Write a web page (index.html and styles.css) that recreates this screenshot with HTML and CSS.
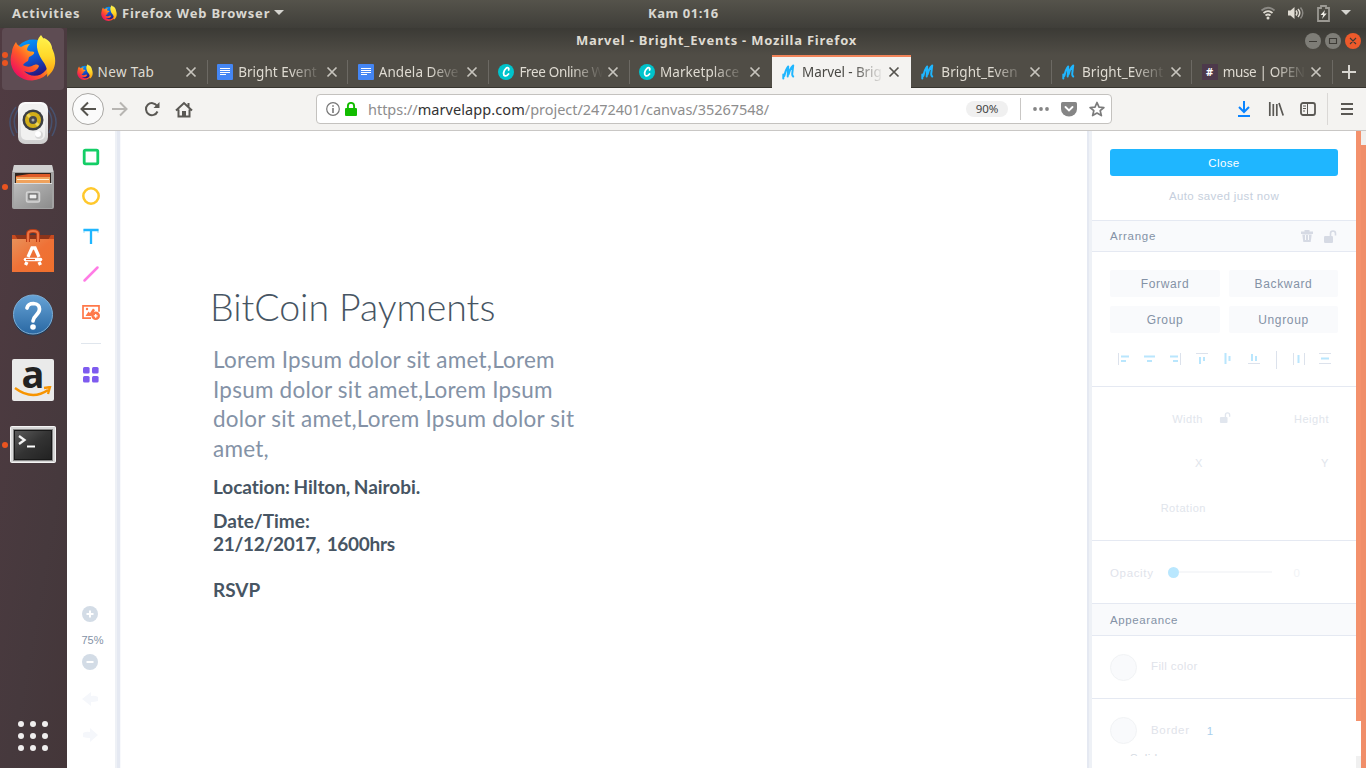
FILE: index.html
```html
<!DOCTYPE html>
<html lang="en">
<head>
<meta charset="utf-8">
<title>Marvel - Bright_Events</title>
<link rel="stylesheet" href="styles.css">
</head>
<body>
<svg class="defs" width="0" height="0" aria-hidden="true">
  <defs>
    <linearGradient id="fxBody" x1="0.9" y1="0.1" x2="0.15" y2="0.85"><stop offset="0" stop-color="#fff44f"/><stop offset=".35" stop-color="#ffb01f"/><stop offset=".65" stop-color="#ff5a28"/><stop offset="1" stop-color="#f0125c"/></linearGradient>
    <linearGradient id="fxGlobe" x1="0" y1="0" x2="0.4" y2="1"><stop offset="0" stop-color="#00a7ff"/><stop offset=".5" stop-color="#0a62e0"/><stop offset="1" stop-color="#27157e"/></linearGradient>
    <linearGradient id="fxTail" x1="0" y1="0" x2="0" y2="1"><stop offset="0" stop-color="#fff44f"/><stop offset=".5" stop-color="#ffd92a"/><stop offset="1" stop-color="#ff980e"/></linearGradient>
    <linearGradient id="grey" x1="0" y1="0" x2="0" y2="1"><stop offset="0" stop-color="#fbfbfb"/><stop offset="1" stop-color="#cfcfcf"/></linearGradient>
    <linearGradient id="steel" x1="0" y1="0" x2="1" y2="1"><stop offset="0" stop-color="#bcbcbc"/><stop offset="1" stop-color="#8c8c8c"/></linearGradient>
    <linearGradient id="bag" x1="0" y1="0" x2="1" y2="1"><stop offset="0" stop-color="#e8915a"/><stop offset=".5" stop-color="#ef7136"/><stop offset="1" stop-color="#f0702c"/></linearGradient>
    <linearGradient id="help" x1="0" y1="0" x2="0" y2="1"><stop offset="0" stop-color="#66a3d6"/><stop offset="1" stop-color="#2a68a3"/></linearGradient>
    <linearGradient id="term" x1="0" y1="0" x2="1" y2="1"><stop offset="0" stop-color="#5a5a5a"/><stop offset=".5" stop-color="#333"/><stop offset="1" stop-color="#222"/></linearGradient>
  </defs>
  <symbol id="firefox" viewBox="0 0 46 48">
    <circle cx="23" cy="24" r="19.500" fill="url(#fxGlobe)"/>
    <path d="M6 7c1 3 3 4 5 5 3-2 6-3 9-3-2 2-3 4-3 6 2 2 5 1 7 2 1 2-3 4-5 5l-1 4c-2 1-4 2-5 4 3 2 6 2 9 1 3-2 6-2 7 0-2 6-10 8-15 5 5 6 16 7 22-1 6-7 3-15-1-21-3-4-3-8-1-11 7 3 9 9 8 14 3 8 0 17-5 22A22 22 0 0 1 7 40C1 34-1 26 2 17 2 13 4 10 6 7z" fill="url(#fxBody)"/>
    <path d="M31 0c4 7 13 11 14 23 1 8-2 14-8 19 1-7-1-12-5-17-5-8-8-18-1-25z" fill="url(#fxTail)"/>
  </symbol>
  <symbol id="x" viewBox="0 0 12 12"><path d="M1.500 1.500l9 9M10.500 1.500l-9 9" fill="none" stroke="currentColor" stroke-width="1.700"/></symbol>
  <symbol id="docs" viewBox="0 0 16 16"><rect width="16" height="16" rx="1" fill="#4486f4"/><path d="M3 4.500h10M3 6.500h10M3 8.500h10M3 10.500h6" stroke="#fff" stroke-width="1"/></symbol>
  <symbol id="canva" viewBox="0 0 16 16"><circle cx="8" cy="8" r="8" fill="#00c4cc"/><path d="M10.600 6c.8-2.500-1.300-3-3-1.200C5.200 7 5 11 6.800 11.800c1.300.5 2.700-.5 3.700-1.800" fill="none" stroke="#fff" stroke-width="1.800" stroke-linecap="round"/></symbol>
  <symbol id="marvel" viewBox="0 0 16 16"><path d="M2.300 10.500v4M3.300 12C4 9 5 5 7.200 2.500L6.700 12.500M7.500 10.500C8.300 7 9.500 4 12.200 1.500L11.200 10q0 2 1 2.500" fill="none" stroke="#1fb6ff" stroke-width="2" stroke-linecap="round" stroke-linejoin="round"/></symbol>
  <symbol id="unlock" viewBox="0 0 14 13"><rect x="1" y="6" width="9" height="7" rx="1.200" fill="currentColor"/><path d="M7.500 6V3.500a2.500 2.500 0 0 1 5 0V5.500" fill="none" stroke="currentColor" stroke-width="1.600"/></symbol>
</svg>

<header class="topbar">
  <span class="activities">Activities</span>
  <span class="app"><svg width="16" height="17"><use href="#firefox"/></svg><span class="appname">Firefox Web Browser</span><svg width="10" height="6"><path d="M0 0h10L5 5z" fill="#d5d4cf"/></svg></span>
  <span class="clock">Kam 01:16</span>
  <span class="status">
    <svg width="16" height="16" viewBox="0 0 16 16" fill="none" stroke="#dfdbd2"><path d="M1.500 5.500Q8 0 14.500 5.500" stroke="#8b8984" stroke-width="1.800"/><path d="M3.500 8Q8 4.200 12.500 8M5.500 10.500Q8 8.500 10.500 10.500" stroke-width="1.700"/><circle cx="8" cy="13" r="1.500" fill="#dfdbd2" stroke="none"/></svg>
    <svg width="16" height="14" viewBox="0 0 16 14" fill="none" stroke="#dfdbd2"><path d="M0 4.500h2.500L6.500 1v12L2.500 9.500H0z" fill="#dfdbd2" stroke="none"/><path d="M8 4.500q2 2.500 0 5M10 3q3.500 4 0 8" stroke-width="1.500"/><path d="M12.500 1.500q4.500 5.500 0 11" stroke="#8b8984" stroke-width="1.500"/></svg>
    <svg width="13" height="17" viewBox="0 0 13 17"><path d="M1 3h3V1h5v2h3v13H1z" fill="none" stroke="#9b9993" stroke-width="1.800"/><path d="M8 5L3.500 10h2.700L5 14l4.700-5.500H7z" fill="#f0eee8"/></svg>
    <svg width="10" height="6"><path d="M0 0h10L5 5z" fill="#d5d4cf"/></svg>
  </span>
</header>

<div class="desktop">
  <nav class="dock">
    <div class="slot active"><i class="dot two"></i><svg width="46" height="48"><use href="#firefox"/></svg></div>
    <div class="slot"><svg width="48" height="46" viewBox="0 0 48 46">
      <g fill="none" stroke="#45628f" stroke-width="1.500" opacity=".6"><path d="M7 7Q-4 20 5 36M41 7q11 13 2 29M9 10Q2 20 8 33M39 10q7 10 1 23"/></g>
      <rect x="9" y="2" width="30" height="42" rx="7" fill="url(#grey)"/><rect x="12" y="4" width="24" height="36" rx="5" fill="#f1f1f0"/>
      <circle cx="24" cy="20" r="10.500" fill="#3c3f43"/><circle cx="24" cy="20" r="8" fill="#d2ae18"/><path d="M18.500 14.500l11 11" stroke="#eed75d" stroke-width="3"/><circle cx="24" cy="20" r="4" fill="#49494a"/><circle cx="24" cy="20" r="1.500" fill="#aaa"/><circle cx="30" cy="35" r="4" fill="#d8d8d8"/><circle cx="29" cy="34" r="3" fill="#fff"/></svg></div>
    <div class="slot"><i class="dot"></i><svg width="42" height="44" viewBox="0 0 42 44">
      <path d="M2 0h38l2 8v34a2 2 0 0 1-2 2H2a2 2 0 0 1-2-2V8z" fill="#a3a3a3"/><path d="M2 0h38l1.500 7H.5z" fill="#d0d0d0"/><rect x="3" y="8" width="36" height="11" fill="#30251f"/><path d="M4 11l13-2h21v8H4z" fill="#df5b28"/><path d="M4 12h34v6H4z" fill="#f0a25c"/><path d="M5 14.500h32" stroke="#fff1d6"/>
      <path d="M2 18h38v25H2z" fill="url(#steel)"/><path d="M2 18.500h38" stroke="#ddd"/><rect x="14.500" y="27" width="13" height="10" rx="1.500" fill="#b0b0b0" stroke="#d3d3d3" stroke-width="1.500"/><rect x="17" y="29" width="8" height="5" fill="#eee" stroke="#555"/></svg></div>
    <div class="slot"><svg width="42" height="44" viewBox="0 0 42 44">
      <path d="M0 6h42v10H0z" fill="#c64b20"/><path d="M3 6l3 5h30l3-5" fill="#8c341a"/><path d="M0 10h42v33H0z" fill="url(#bag)"/><path d="M16 13V5q0-3 5-3t5 3v8" fill="none" stroke="#b93f18" stroke-width="4"/><path d="M16 13V5q0-3 5-3t5 3v8" fill="none" stroke="#ee7443" stroke-width="2"/>
      <path d="M16 28L20 19h3l4 9M15 33l-1.500 3M27 33l1.500 3" fill="none" stroke="#fff" stroke-width="3.300"/><path d="M13.500 30.500h15" stroke="#fff" stroke-width="3.600" stroke-linecap="round"/><path d="M14 30.500h9" stroke="#e4612b" stroke-width="1.200"/></svg></div>
    <div class="slot"><svg width="42" height="42" viewBox="0 0 42 42"><circle cx="21" cy="21.500" r="20" fill="#203d5c"/><circle cx="21" cy="20.500" r="19.500" fill="url(#help)" stroke="#80afd5"/><path d="M15 14q1-4.500 6.500-4.500 6 .5 6 5.500c0 6-6 6-6.500 12" fill="none" stroke="#fff" stroke-width="3.700" stroke-linecap="round"/><circle cx="21" cy="33" r="2.800" fill="#fff"/></svg></div>
    <div class="slot amazon"><span class="a">a</span><svg class="smile" width="38" height="12" viewBox="0 0 38 12"><path d="M1 2q17 13 33 2M30 2l6-1-2 7" fill="none" stroke="#f79400" stroke-width="2.300"/></svg></div>
    <div class="slot"><i class="dot"></i><svg width="46" height="38" viewBox="0 0 46 38"><rect x=".5" y=".5" width="45" height="36" rx="1" fill="#d7d7d7" stroke="#f4f4f4"/><rect x="3.500" y="3.500" width="39" height="31" fill="#181818" stroke="#888"/><rect x="5" y="5" width="36" height="28" fill="url(#term)"/><path d="M9 10l5.500 4L9 18" fill="none" stroke="#f3f3f3" stroke-width="2.300"/><path d="M17 20.500h8" stroke="#fff" stroke-width="2"/></svg></div>
    <div class="grid"><i></i><i></i><i></i><i></i><i></i><i></i><i></i><i></i><i></i></div>
  </nav>

  <main class="window">
    <div class="titlebar"><span>Marvel - Bright_Events - Mozilla Firefox</span>
      <svg class="winbtns" width="58" height="18" viewBox="0 0 58 18"><circle cx="9" cy="9" r="8" fill="#7e7d77"/><circle cx="29" cy="9" r="8" fill="#7e7d77"/><circle cx="49" cy="9" r="8" fill="#ed5a2b"/><path d="M5 9.500h8M25.500 6.500h7v5h-7zM46 6l6 6M52 6l-6 6" fill="none" stroke="#3d3b36" stroke-width="1.100"/></svg>
    </div>
    <div class="tabs">
      <div class="tab newtab"><svg width="16" height="17"><use href="#firefox"/></svg><span>New Tab</span><svg class="x" width="12" height="12"><use href="#x"/></svg></div>
      <div class="tab"><svg width="16" height="16"><use href="#docs"/></svg><span>Bright Event</span><svg class="x" width="12" height="12"><use href="#x"/></svg></div>
      <div class="tab"><svg width="16" height="16"><use href="#docs"/></svg><span>Andela Deve</span><svg class="x" width="12" height="12"><use href="#x"/></svg></div>
      <div class="tab"><svg width="16" height="16"><use href="#canva"/></svg><span class="tight">Free Online W</span><svg class="x" width="12" height="12"><use href="#x"/></svg></div>
      <div class="tab last"><svg width="16" height="16"><use href="#canva"/></svg><span>Marketplace</span><svg class="x" width="12" height="12"><use href="#x"/></svg></div>
      <div class="tab current"><svg width="16" height="16"><use href="#marvel"/></svg><span>Marvel - Brig</span><svg class="x" width="12" height="12"><use href="#x"/></svg></div>
      <div class="tab"><svg width="16" height="16"><use href="#marvel"/></svg><span>Bright_Even</span><svg class="x" width="12" height="12"><use href="#x"/></svg></div>
      <div class="tab"><svg width="16" height="16"><use href="#marvel"/></svg><span>Bright_Event</span><svg class="x" width="12" height="12"><use href="#x"/></svg></div>
      <div class="tab"><b class="hash">#</b><span class="tight">muse | OPEN</span><svg class="x" width="12" height="12"><use href="#x"/></svg></div>
      <div class="plus"><svg width="14" height="14"><path d="M7 0v14M0 7h14" stroke="#d8d6d0" stroke-width="2"/></svg></div>
    </div>

    <div class="navbar">
      <div class="back"><svg width="18" height="16" viewBox="0 0 18 16"><path d="M17 8H2.500M9 1.500L2.500 8 9 14.500" fill="none" stroke="#56544f" stroke-width="2"/></svg></div>
      <svg class="fwd" width="18" height="16" viewBox="0 0 18 16"><path d="M1 8h14.500M9 1.500L15.500 8 9 14.500" fill="none" stroke="#b7b5b2" stroke-width="2"/></svg>
      <svg class="reload" width="16" height="16" viewBox="0 0 16 16"><path d="M13.500 10.500A6 6 0 1 1 13 4.800" fill="none" stroke="#5a5854" stroke-width="2"/><path d="M15.500 1v6h-6z" fill="#5a5854"/></svg>
      <svg class="home" width="18" height="17" viewBox="0 0 18 17"><path d="M1 9.500L9 2l8 7.500M3.500 8.500V15.500h11V8.500M13.500 2v4" fill="none" stroke="#5a5854" stroke-width="2"/><rect x="7" y="10" width="4" height="5" fill="#5a5854"/></svg>
      <div class="url">
        <svg width="14" height="14" viewBox="0 0 14 14"><circle cx="7" cy="7" r="6.300" fill="none" stroke="#777" stroke-width="1.200"/><path d="M7 6v5M7 3.200v1.600" stroke="#777" stroke-width="1.600"/></svg>
        <svg class="lock" width="12" height="14" viewBox="0 0 12 14"><path d="M2.900 7V4a3.100 3.100 0 0 1 6.200 0v3" fill="none" stroke="#12bc00" stroke-width="1.900"/><rect y="6" width="12" height="8" rx="1" fill="#12bc00"/></svg>
        <span class="addr">https://<em>marvelapp.com</em>/project/2472401/canvas/35267548/</span>
        <span class="zoom">90%</span><i class="sep"></i>
        <svg width="16" height="4" viewBox="0 0 16 4" fill="#858585"><circle cx="2" cy="2" r="1.900"/><circle cx="8" cy="2" r="1.900"/><circle cx="14" cy="2" r="1.900"/></svg>
        <svg class="pocket" width="16" height="15" viewBox="0 0 16 15"><path d="M1.500 0h13Q16 0 16 1.500V7A8 7.500 0 0 1 0 7V1.500Q0 0 1.500 0z" fill="#858585"/><path d="M4.500 5L8 8.500 11.500 5" fill="none" stroke="#fff" stroke-width="1.900" stroke-linecap="round"/></svg>
        <svg class="star" width="16" height="16" viewBox="0 0 16 16"><path d="M8 1.500l2 4.600 4.900.4-3.700 3.200 1.200 4.900L8 12l-4.400 2.600 1.200-4.900L1.100 6.500 6 6.100z" fill="none" stroke="#7b7b7b" stroke-width="1.700" stroke-linejoin="round"/></svg>
      </div>
      <div class="tools">
        <svg width="14" height="16" viewBox="0 0 14 16"><path d="M7 0v11M2 6l5 5 5-5M1 15h12" fill="none" stroke="#0a84ff" stroke-width="2"/></svg>
        <svg width="16" height="14" viewBox="0 0 16 14"><path d="M1.800 0v14M5.300 2v12M8.800 2v12M11 1l4.200 12.500" fill="none" stroke="#5a5854" stroke-width="1.700"/></svg>
        <svg width="16" height="14" viewBox="0 0 16 14"><rect x="1" y="1" width="14" height="12" rx="2" fill="none" stroke="#5a5854" stroke-width="1.800"/><path d="M7.500 1v12M3 4h3M3 6.500h3M3 9h2" fill="none" stroke="#5a5854"/></svg>
      </div>
      <div class="burger"><svg width="12" height="12"><path d="M0 1h12M0 6h12M0 11h12" stroke="#5a5854" stroke-width="1.800"/></svg></div>
    </div>

    <section class="page">
      <aside class="toolbar">
        <svg class="t1" width="18" height="18"><rect x="2.200" y="2.200" width="13.600" height="13.600" rx="1.300" fill="none" stroke="#13ce66" stroke-width="2.800"/></svg>
        <svg class="t2" width="18" height="18"><circle cx="9" cy="9" r="7.700" fill="none" stroke="#ffc82c" stroke-width="2.500"/></svg>
        <svg class="t3" width="18" height="18"><path d="M1.500 3h15M9 3v14" fill="none" stroke="#1fb6ff" stroke-width="2.300"/><path d="M2 2v4M16 2v4" stroke="#1fb6ff" stroke-width=".8" opacity=".6"/></svg>
        <svg class="t4" width="18" height="18"><path d="M2.500 15.500l13-13" stroke="#ff7ce5" stroke-width="2.500" stroke-linecap="round"/></svg>
        <svg class="t5" width="18" height="17" viewBox="0 0 18 17"><path d="M9 14.200H1V1.800h16v6" fill="none" stroke="#ff7849" stroke-width="1.700"/><path d="M3.500 12l3-4.500L8 9l3-4.500L13 6 9.500 12z" fill="#ff7849"/><circle cx="5" cy="5" r="1.200" fill="#ff7849"/><circle cx="13.700" cy="11.800" r="4.300" fill="#ff7849"/><path d="M13.700 9.900v3.800M11.800 11.800h3.800" stroke="#fff" stroke-width="1.300"/></svg>
        <hr>
        <svg class="t6" width="16" height="16" fill="#7e5bef"><rect width="6.600" height="6.600" rx="1.500"/><rect x="9" width="6.600" height="6.600" rx="1.500"/><rect y="9" width="6.600" height="6.600" rx="1.500"/><rect x="9" y="9" width="6.600" height="6.600" rx="1.500"/></svg>
        <div class="zoomer">
          <svg width="16" height="16"><circle cx="8" cy="8" r="8" fill="#d3dce6"/><path d="M8 4.500v7M4.500 8h7" stroke="#fff" stroke-width="2"/></svg>
          <span>75%</span>
          <svg width="16" height="16"><circle cx="8" cy="8" r="8" fill="#d3dce6"/><path d="M4.500 8h7" stroke="#fff" stroke-width="2"/></svg>
          <svg class="undo" width="16" height="14"><path d="M0 7l9-7v4q4-1 7 1v4q-3 1-7 1v4z" fill="#f5f7fb"/></svg>
          <svg class="redo" width="16" height="14"><path d="M16 7L8 0v4q-4-1-7 1v4q3 1 7 1v4z" fill="#f5f7fb"/></svg>
        </div>
      </aside>
      <article class="canvas">
        <h1>BitCoin Payments</h1>
        <p class="lorem">Lorem Ipsum dolor sit amet,Lorem<br>Ipsum dolor sit amet,Lorem Ipsum<br>dolor sit amet,Lorem Ipsum dolor sit<br>amet,</p>
        <p class="loc">Location: Hilton, Nairobi.</p>
        <p class="date">Date/Time:<br><span>21/12/2017,&nbsp; 1600hrs</span></p>
        <p class="rsvp">RSVP</p>
      </article>
      <aside class="panel">
        <div class="save"><button>Close</button><span>Auto saved just now</span></div>
        <div class="head"><span>Arrange</span><div class="acts"><svg width="12" height="12" viewBox="0 0 12 12"><path d="M0 1.500h3.500V0h5v1.500H12V4H0z" fill="#d6dae4"/><path d="M1.300 4.500h9.400L9.700 12H2.300z" fill="#d6dae4"/><path d="M4.500 5v5M7.500 5v5" stroke="#f9fafc"/></svg><svg width="14" height="13"><use href="#unlock"/></svg></div></div>
        <div class="arrange">
          <div class="btns"><button>Forward</button><button>Backward</button><button>Group</button><button>Ungroup</button></div>
          <svg class="aligns" width="228" height="22" viewBox="0 0 228 22" fill="none">
            <path d="M11 8.500h8M11 13h5M34 8.500h11M37 13h5M60 8.500h8M63 13h5M90 9v7M94 9v4M115.500 5v11M119.500 8v5M142 6v7M146 8v5M188.500 7v8M211 10.500h8" stroke="#b9e6fd" stroke-width="2"/>
            <path d="M8.500 5v12M70.500 5v12M86 5.500h12M138 15.500h12M183.500 5v12M194.500 5v12M209 5.500h12M209 15.500h12" stroke="#dce2ec"/>
            <path d="M166.500 3v18" stroke="#dce2ec"/>
          </svg>
        </div>
        <div class="dims"><span>Width</span><svg width="12" height="11" viewBox="0 0 14 13"><use href="#unlock"/></svg><span>Height</span><span>X</span><i></i><span>Y</span><span class="rot">Rotation</span></div>
        <div class="opacity"><span>Opacity</span><div class="slider"><i></i></div><span class="zero">0</span></div>
        <div class="head app2"><span>Appearance</span></div>
        <div class="row fill"><i class="swatch"></i><span>Fill color</span></div>
        <div class="row border"><i class="swatch"></i><span>Border</span><span class="one">1</span></div>
        <div class="solid"><span>Solid</span></div>
      </aside>
      <div class="edge"><div class="inner"><i></i><b></b><u></u></div><div class="outer"></div></div>
    </section>
  </main>
</div>
</body>
</html>
```
FILE: styles.css
```css
* { box-sizing: border-box; }
body { margin: 0; width: 1366px; height: 768px; overflow: hidden; font-family: "Noto Sans", sans-serif; background: #fff; }
svg { display: block; flex: none; }
.defs { position: absolute; }
i { font-style: normal; display: block; }
button { border: 0; padding: 0; font: inherit; color: inherit; letter-spacing: inherit; }

.topbar { height: 28px; display: grid; grid-template-columns: 101px 547px 1fr auto; align-items: center; background: linear-gradient(#55534b, #3f3e39); color: #d9d7d1; font-weight: 700; font-size: 13px; line-height: 24px; padding: 0 0 2px; }
.activities { padding-left: 12px; letter-spacing: .8px; }
.app { display: flex; align-items: center; gap: 5px; letter-spacing: .8px; }
.appname { margin-right: -1px; }
.clock { letter-spacing: .55px; }
.status { display: flex; align-items: center; gap: 12px; padding-right: 15px; }
.status svg:nth-child(3) { margin-left: 1px; margin-right: -1px; }

.desktop { display: flex; height: 740px; }
.dock { width: 67px; flex: none; background: linear-gradient(100deg, #503b42, #46393d 70%, #443639); display: flex; flex-direction: column; align-items: center; padding: 0 1px 0 0; }
.slot { width: 62px; height: 62px; margin-bottom: 2px; display: flex; align-items: center; justify-content: center; position: relative; }
.slot.active { background: #5e4c53; border-radius: 4px; }
.slot:nth-child(n+4) { margin-bottom: 2.400px; }
.dot { position: absolute; left: 0; top: 28px; width: 6px; height: 6px; border-radius: 3px; background: #e95420; }
.dot.two { top: 24px; box-shadow: 0 8px #e95420; }
.slot.amazon { width: 42px; height: 42px; margin: 10px 0 13px; border-radius: 2px; background: #eaeaea; display: block; }
.amazon .a { display: block; text-align: center; font: 700 38px/32px "Open Sans", sans-serif; height: 28px; color: #222; margin-top: -3px; padding-top: 1px; }
.smile { margin: 2px 0 0 2px; }
.grid { margin-top: auto; margin-bottom: 17px; display: grid; grid-template-columns: repeat(3, 6px); gap: 6px; }
.grid i { width: 6px; height: 6px; border-radius: 50%; background: #f0eeee; }

.window { flex: 1; min-width: 0; display: flex; flex-direction: column; background: #f4f3f1; }
.titlebar { height: 27px; flex: none; background: linear-gradient(#3b3a35, #504d46); color: #dfdbd2; font-weight: 700; font-size: 13px; line-height: 25px; letter-spacing: .78px; text-align: center; position: relative; }
.winbtns { position: absolute; right: 4px; top: 4px; }
.tabs { height: 33px; flex: none; display: flex; background: linear-gradient(#504d46, #504d46 32px, #37352f 32px); color: #dfdbd2; font-size: 13.500px; }
.tab { width: 140.650px; flex: none; display: flex; align-items: center; padding: 1px 10.500px 0 9.500px; position: relative; }
.tab::after { content: ""; position: absolute; right: 0; top: 5px; width: 1px; height: 24px; background: #6c6963; }
.tab.last::after, .current::after { display: none; }
.tab span { flex: 1; margin-left: 5px; white-space: nowrap; overflow: hidden; letter-spacing: .05px; -webkit-mask-image: linear-gradient(90deg, #000 62%, transparent); mask-image: linear-gradient(90deg, #000 62%, transparent); }
.tab .tight { letter-spacing: -.35px; }
.newtab span { mask-image: none; -webkit-mask-image: none; letter-spacing: .4px; }
.tab .x { margin-left: 4px; color: #c7c4bd; }
.last { width: 142px; }
.current { width: 139.300px; background: #f4f3f1; border-top: 2px solid #f1845a; padding-top: 0; padding-bottom: 1px; color: #4a4945; }
.current span { letter-spacing: -.1px; }
.current .x { color: #55534e; }
.hash { width: 16px; height: 16px; background: #4d394b; color: #fff; font-size: 11px; line-height: 16px; text-align: center; }
.plus { flex: 1; display: flex; align-items: center; justify-content: center; }

.navbar { height: 43px; flex: none; display: flex; align-items: center; border-bottom: 1px solid #c9c7c5; padding: 0; }
.back { width: 32px; height: 32px; margin-left: 5px; border: 1px solid #a9a7a4; border-radius: 50%; background: #fbfbfb; display: flex; align-items: center; justify-content: center; }
.fwd { margin-left: 7px; }
.reload { margin-left: 15px; }
.home { margin-left: 15px; }
.url { width: 796px; height: 30px; margin-left: 123px; background: #fff; border: 1px solid #c4c2bf; border-radius: 4px; display: flex; align-items: center; padding: 0 6px 0 9px; font-size: 14.500px; color: #8d8d8d; }
.url em { font-style: normal; color: #333; letter-spacing: .07px; }
.lock { margin-left: 5px; }
.addr { margin-left: 11px; flex: 1; white-space: nowrap; letter-spacing: -.03px; }
.zoom { width: 42px; height: 16px; border-radius: 8px; background: #f0f0f0; color: #444; font-size: 11.500px; line-height: 16px; text-align: center; }
.sep { width: 1px; height: 22px; background: #c9c7c5; margin: 0 12px; }
.pocket { margin-left: 12px; }
.star { margin-left: 12px; }
.tools { display: flex; align-items: center; gap: 17px; margin-left: 125px; }
.tools svg:nth-child(3) { margin-left: -1px; margin-right: 1px; }
.burger { margin-left: 10px; border-left: 1px solid #dad8d6; height: 32px; padding-left: 13px; display: flex; align-items: center; }

.page { flex: 1; min-height: 0; display: flex; background: #fff; overflow: hidden; }
.toolbar { width: 54px; flex: none; background: linear-gradient(90deg, #fff 48px, #eef1f6 48px, #eef1f6 50px, #e5e9f2 50px, #e5e9f2 53px, #f8f9fc 53px); display: flex; flex-direction: column; align-items: center; padding: 17px 6px 0 0; }
.t2 { margin-top: 21px; }
.t3 { margin-top: 22px; }
.t4 { margin-top: 20px; }
.t5 { margin-top: 21px; }
.toolbar hr { width: 20px; height: 1px; border: 0; background: #e0e6ed; margin: 22px 0 23px; }
.zoomer { margin-top: auto; margin-bottom: 26px; display: flex; flex-direction: column; align-items: center; font: 11px/14px "Liberation Sans", sans-serif; color: #8492a6; padding-right: 2px; }
.zoomer span { margin: 11px -5px 7px 0; }
.undo { margin-top: 22px; }
.redo { margin: 22px 0 0; }

.canvas { width: 971px; flex: none; background: linear-gradient(90deg, #fff 966px, #e5e9f2 966px, #e5e9f2 968px, #eef1f6 968px); color: #475563; font-family: Lato, sans-serif; padding: 153px 0 0 92px; font-variant-ligatures: none; }
.canvas h1 { font-weight: 300; font-size: 37.500px; line-height: 46px; margin: 0 0 0 -3px; letter-spacing: -.05px; }
.canvas p { margin: 0; white-space: nowrap; font-weight: 700; font-size: 19px; line-height: 23px; }
.canvas .lorem { margin-top: 15px; font-weight: 400; font-size: 22.500px; line-height: 29.600px; letter-spacing: .22px; color: #8492a6; }
.canvas .loc { margin-top: 12px; letter-spacing: -.05px; word-spacing: -1px; }
.canvas .date { margin-top: 11px; }
.date span { letter-spacing: -.3px; word-spacing: -1px; }
.canvas .rsvp { margin-top: 23px; }

.panel { width: 264px; flex: none; font: 11.500px/15px "Liberation Sans", sans-serif; letter-spacing: .38px; color: #8492a6; display: flex; flex-direction: column; }
.save { height: 89px; padding: 18px 18px 0; display: flex; flex-direction: column; text-align: center; color: #c6cfdd; gap: 13px; flex: none; }
.save button { height: 27px; background: #1fb6ff; color: #fff; border-radius: 3px; padding-top: 2px; }
.head { height: 32px; flex: none; border: solid #e5e9f2; border-width: 1px 0; background: #f9fafc; display: flex; align-items: center; justify-content: space-between; padding: 0 19px 0 18px; letter-spacing: .75px; }
.acts { display: flex; gap: 10px; color: #d6dae4; }
.arrange { height: 134px; flex: none; padding: 18px 18px 0; }
.btns { display: grid; grid-template-columns: 110px 109px; gap: 9px; }
.btns button { height: 27px; background: #f9fafc; border-radius: 2px; padding-top: 2px; font-size: 12px; letter-spacing: .65px; }
.aligns { margin-top: 15px; }
.dims { height: 155px; flex: none; border: solid #e5e9f2; border-width: 1px 0; display: grid; grid-template-columns: 111px 28px 98px; grid-auto-rows: 44.500px; padding: 10px 0 0; align-items: center; justify-items: end; color: #e1e5ec; font-size: 11px; letter-spacing: .55px; }
.dims .rot { margin-right: -3px; }
.dims svg { color: #e1e6ee; margin-top: -4px; }
.opacity { height: 62px; flex: none; display: flex; align-items: center; padding: 2px 18px 0; color: #dfe3eb; letter-spacing: .65px; }
.slider { width: 104px; height: 2px; margin-left: 14px; margin-top: -2px; background: #f6f7f9; display: flex; align-items: center; }
.slider i { width: 11px; height: 11px; flex: none; border-radius: 50%; background: #b9e7fe; }
.zero { margin-left: 22px; color: #f1f3f6; }
.app2 { height: 33px; padding-top: 2px; letter-spacing: .6px; }
.row { height: 63px; flex: none; display: flex; align-items: center; border-bottom: 1px solid #e5e9f2; padding: 0 18px; color: #dfe3ea; }
.row.border { border: 0; height: 57px; padding-top: 6px; letter-spacing: .7px; }
.swatch { width: 27px; height: 27px; margin-right: 14px; border: 1px solid #f1f3f5; border-radius: 50%; background: #f9fafc; }
.row span { margin-top: -1px; }
.row .one { margin: 1px 0 0 17px; color: #a9cfec; }
.solid { height: 3px; flex: none; overflow: hidden; padding-left: 38px; margin-top: -3px; color: #d3d9e2; line-height: 11px; }

.edge { width: 10px; flex: none; display: flex; }
.inner { width: 5px; display: flex; flex-direction: column; }
.inner i { height: 590px; background: #f4916c; }
.inner b { height: 35px; background: #fff; }
.inner u { flex: 1; background: #f0f0f0; }
.outer { width: 5px; background: #f08e69; border-top: 14px solid #f0efed; }
```
